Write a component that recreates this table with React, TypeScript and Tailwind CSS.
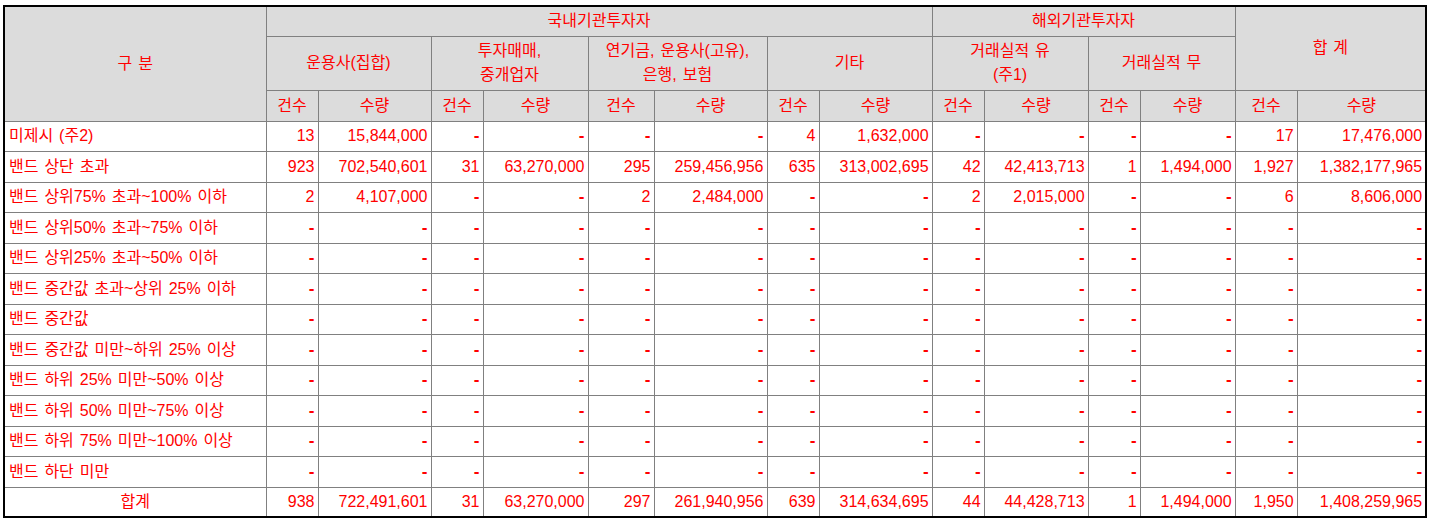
const D = '-';

type Row = { label: string; vals: string[] };

const dashes = Array(14).fill(D);

const rows: Row[] = [
  {
    label: '미제시 (주2)',
    vals: ['13', '15,844,000', D, D, D, D, '4', '1,632,000', D, D, D, D, '17', '17,476,000'],
  },
  {
    label: '밴드 상단 초과',
    vals: [
      '923', '702,540,601', '31', '63,270,000', '295', '259,456,956', '635', '313,002,695',
      '42', '42,413,713', '1', '1,494,000', '1,927', '1,382,177,965',
    ],
  },
  {
    label: '밴드 상위75% 초과~100% 이하',
    vals: ['2', '4,107,000', D, D, '2', '2,484,000', D, D, '2', '2,015,000', D, D, '6', '8,606,000'],
  },
  { label: '밴드 상위50% 초과~75% 이하', vals: dashes },
  { label: '밴드 상위25% 초과~50% 이하', vals: dashes },
  { label: '밴드 중간값 초과~상위 25% 이하', vals: dashes },
  { label: '밴드 중간값', vals: dashes },
  { label: '밴드 중간값 미만~하위 25% 이상', vals: dashes },
  { label: '밴드 하위 25% 미만~50% 이상', vals: dashes },
  { label: '밴드 하위 50% 미만~75% 이상', vals: dashes },
  { label: '밴드 하위 75% 미만~100% 이상', vals: dashes },
  { label: '밴드 하단 미만', vals: dashes },
];

const total = [
  '938', '722,491,601', '31', '63,270,000', '297', '261,940,956', '639', '314,634,695',
  '44', '44,428,713', '1', '1,494,000', '1,950', '1,408,259,965',
];

const colWidths = [262, 52, 113, 52, 105, 66, 113, 52, 113, 52, 104, 52, 95, 62, 129];

const th = 'border border-[#808080] bg-[#dcdcdc] font-normal text-center align-middle leading-[24px]';
const td = 'border border-[#808080] text-right align-middle pr-[3px] whitespace-nowrap';

function Cell({ v }: { v: string }) {
  return (
    <td className={td}>
      {v === D ? <span className="font-bold text-[17px]">-</span> : v}
    </td>
  );
}

export default function App() {
  return (
    <div className="bg-white min-h-[519px] pt-[5px] pl-[3px] text-[#ff0000] text-[16px] font-['Liberation_Sans','Noto_Sans_CJK_KR',sans-serif] [word-spacing:1.5px]">
      <table className="table-fixed border-collapse border-2 border-black w-[1422px]">
        <colgroup>
          {colWidths.map((w, i) => (
            <col key={i} style={{ width: w }} />
          ))}
        </colgroup>
        <thead>
          <tr className="h-[30px]">
            <th rowSpan={3} className={th}>
              구 분
            </th>
            <th colSpan={8} className={th}>
              국내기관투자자
            </th>
            <th colSpan={4} className={th}>
              해외기관투자자
            </th>
            <th rowSpan={2} colSpan={2} className={th}>
              합 계
            </th>
          </tr>
          <tr className="h-[54px]">
            <th colSpan={2} className={th}>
              운용사(집합)
            </th>
            <th colSpan={2} className={th}>
              투자매매,
              <br />
              중개업자
            </th>
            <th colSpan={2} className={th}>
              연기금, 운용사(고유),
              <br />
              은행, 보험
            </th>
            <th colSpan={2} className={th}>
              기타
            </th>
            <th colSpan={2} className={th}>
              거래실적 유
              <br />
              (주1)
            </th>
            <th colSpan={2} className={th}>
              거래실적 무
            </th>
          </tr>
          <tr className="h-[31px]">
            {Array.from({ length: 7 }).flatMap((_, i) => [
              <th key={`c${i}`} className={th}>
                건수
              </th>,
              <th key={`q${i}`} className={th}>
                수량
              </th>,
            ])}
          </tr>
        </thead>
        <tbody>
          {rows.map((r, ri) => (
            <tr key={r.label} className={ri % 2 === 0 ? 'h-[30px]' : 'h-[31px]'}>
              <td className="border border-[#808080] text-left align-middle pl-[4px] whitespace-nowrap">
                {r.label}
              </td>
              {r.vals.map((v, i) => (
                <Cell key={i} v={v} />
              ))}
            </tr>
          ))}
          <tr className="h-[30px]">
            <td className="border border-[#808080] text-center align-middle">합계</td>
            {total.map((v, i) => (
              <Cell key={i} v={v} />
            ))}
          </tr>
        </tbody>
      </table>
    </div>
  );
}
